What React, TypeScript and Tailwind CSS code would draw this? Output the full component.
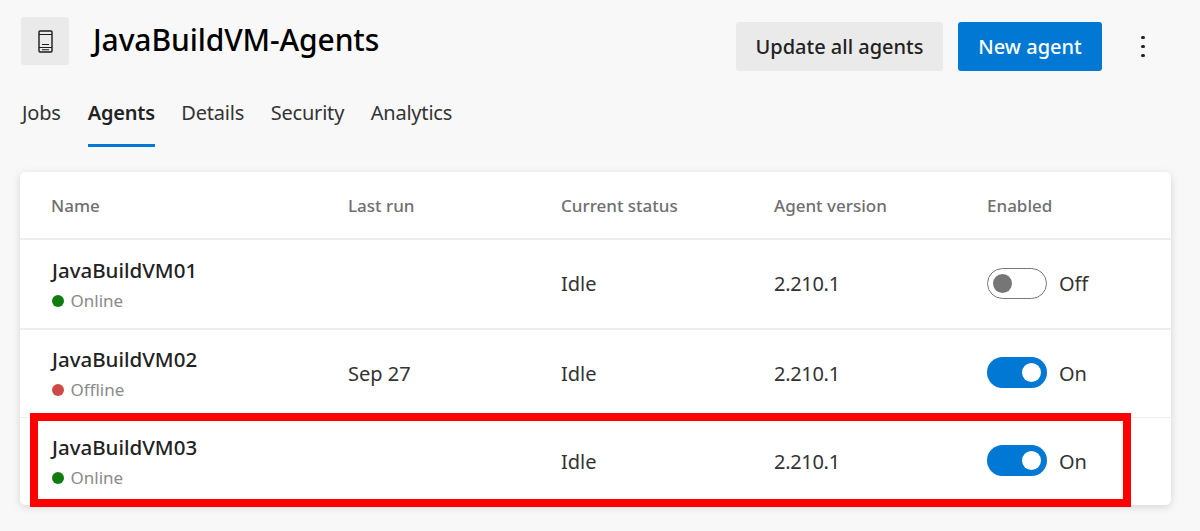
const tabs = ["Jobs", "Agents", "Details", "Security", "Analytics"];

const agents = [
  { name: "JavaBuildVM01", online: true, lastRun: "", enabled: false, rowClass: "h-[90px] border-t-2" },
  { name: "JavaBuildVM02", online: false, lastRun: "Sep 27", enabled: true, rowClass: "h-[89px] border-t-2" },
  { name: "JavaBuildVM03", online: true, lastRun: "", enabled: true, rowClass: "h-[88px] border-t" },
];

function Toggle({ on }: { on: boolean }) {
  return (
    <div className="flex items-center gap-3">
      {on ? (
        <div className="mb-[2px] flex h-[31px] w-[60px] items-center justify-end rounded-full bg-[#0078d4] pr-[6px]">
          <div className="h-[19px] w-[19px] rounded-full bg-white" />
        </div>
      ) : (
        <div className="mb-[1px] flex h-[31px] w-[60px] items-center rounded-full border-[1.5px] border-[#777777] bg-white pl-[5px]">
          <div className="h-[19px] w-[19px] rounded-full bg-[#767676]" />
        </div>
      )}
      <span className="text-[20px] text-[#333333]">{on ? "On" : "Off"}</span>
    </div>
  );
}

export default function App() {
  return (
    <div className="relative h-[531px] w-[1200px] overflow-hidden bg-[#f8f8f8] font-['Noto_Sans',sans-serif] text-[#1f1f1f]">
      <div className="flex h-[71px] items-start pl-[21px] pr-[55.5px] pt-[17px]">
        <div className="flex h-[48px] w-[48px] items-center justify-center rounded-[3px] bg-[#eaeaea]">
          <svg width="15" height="23" viewBox="0 0 15 23" fill="none" stroke="#1c1c1c" strokeWidth="1.4">
            <rect x="1" y="1" width="13" height="21" rx="1" />
            <path d="M1 4.5h13M1 17.5h13M4 14.5h7M4 19.8h7" strokeWidth="1.1" />
          </svg>
        </div>
        <h1 className="ml-6 text-[30px] leading-[46px] font-medium tracking-[-0.1px] text-black">JavaBuildVM-Agents</h1>
        <div className="ml-auto mt-[5px] flex items-center">
          <button className="flex h-[49px] w-[207px] items-center justify-center rounded-[3px] bg-[#eaeaea] pt-px text-[20px] font-medium text-[#222222]">
            Update all agents
          </button>
          <button className="ml-[15px] flex h-[49px] w-[144px] items-center justify-center rounded-[3px] bg-[#0078d4] pt-px text-[20px] font-medium text-white">
            New agent
          </button>
          <div className="ml-[39px] flex w-[3.5px] flex-col gap-[5.5px]">
            <div className="h-[3.5px] w-[3.5px] rounded-full bg-[#222222]" />
            <div className="h-[3.5px] w-[3.5px] rounded-full bg-[#222222]" />
            <div className="h-[3.5px] w-[3.5px] rounded-full bg-[#222222]" />
          </div>
        </div>
      </div>

      <div className="mt-[10px] flex h-[66px] gap-[26.5px] pl-[22px]">
        {tabs.map((tab) => (
          <div
            key={tab}
            className={`h-[66px] pt-[17px] text-[20px] leading-[30px] tracking-[-0.2px] ${
              tab === "Agents"
                ? "ml-[0.5px] border-b-[3px] border-[#0078d4] font-semibold text-[#222222]"
                : "text-[#333333]"
            }`}>
            {tab}
          </div>
        ))}
      </div>

      <div className="mx-[20px] mt-[25px] w-[1151px] rounded-[5px] bg-white shadow-[0_2px_8px_rgba(0,0,0,0.14)]">
        <div className="grid h-[66px] grid-cols-[297px_213px_213px_213px_1fr] items-center pl-[31px] pt-px text-[17px] font-medium text-[#6f6f6f]">
          <span>Name</span>
          <span>Last run</span>
          <span>Current status</span>
          <span>Agent version</span>
          <span>Enabled</span>
        </div>
        {agents.map((agent) => (
          <div
            key={agent.name}
            className={`grid grid-cols-[297px_213px_213px_213px_1fr] items-center border-[#eeeeee] pl-[31px] text-[20px] text-[#333333] ${agent.rowClass}`}>
            <div className="pl-px">
              <div className="text-[20.5px] leading-[28px] font-medium text-[#222222]">{agent.name}</div>
              <div className="mt-[5px] flex items-center gap-[6.5px] text-[17px] leading-[24px] text-[#8a8a8a]">
                <span className={`h-[12px] w-[12px] rounded-full ${agent.online ? "bg-[#107c10]" : "bg-[#cd4a45]"}`} />
                {agent.online ? "Online" : "Offline"}
              </div>
            </div>
            <span>{agent.lastRun}</span>
            <span>Idle</span>
            <span className="tracking-[-0.3px]">2.210.1</span>
            <Toggle on={agent.enabled} />
          </div>
        ))}
      </div>

      <div className="absolute left-[30px] top-[413px] h-[94px] w-[1101px] border-[8px] border-[#ff0000]" />
    </div>
  );
}
